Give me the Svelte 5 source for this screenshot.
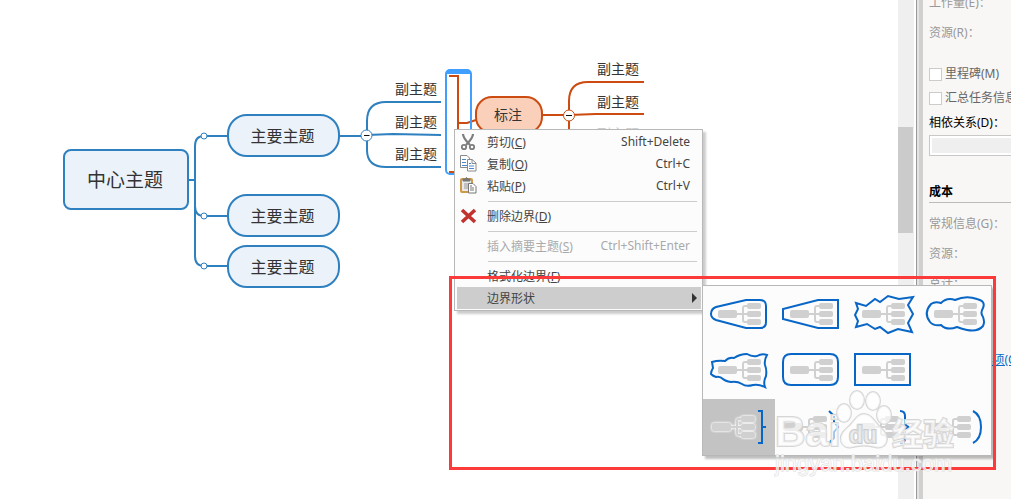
<script lang="ts">
  const topics = [
    { text: '中心主题', kind: 'central', x: 63, y: 149 },
    { text: '主要主题', kind: 'main', x: 227, y: 114 },
    { text: '主要主题', kind: 'main', x: 227, y: 194 },
    { text: '主要主题', kind: 'main', x: 227, y: 245 },
    { text: '副主题', kind: 'sub', x: 395, y: 78 },
    { text: '副主题', kind: 'sub', x: 395, y: 111 },
    { text: '副主题', kind: 'sub', x: 395, y: 143 },
    { text: '标注', kind: 'callout', x: 475, y: 96 },
    { text: '副主题', kind: 'sub', x: 597, y: 58 },
    { text: '副主题', kind: 'sub', x: 597, y: 91 },
    { text: '副主题', kind: 'sub faded', x: 597, y: 123 }
  ];

  const menu = [
    { label: '剪切', key: 'C', shortcut: 'Shift+Delete', icon: 'cut' },
    { label: '复制', key: 'O', shortcut: 'Ctrl+C', icon: 'copy' },
    { label: '粘贴', key: 'P', shortcut: 'Ctrl+V', icon: 'paste' },
    null,
    { label: '删除边界', key: 'D', icon: 'delete' },
    null,
    { label: '插入摘要主题', key: 'S', shortcut: 'Ctrl+Shift+Enter', disabled: true },
    null,
    { label: '格式化边界', key: 'F' },
    { label: '边界形状', submenu: true }
  ];

  const shapes = [
    { name: '圆角锥形', d: 'M43 14H57Q63 14 63 20V36Q63 42 57 42H43L13 34Q8 32 8 28Q8 23 13 21Z' },
    { name: '直角锥形', d: 'M43 14H63V42H43L8 33V23Z' },
    { name: '锯齿', d: 'M9 17L19 20L28 13L33 16L41 10L52 13L66 11L61 19L66 28L61 37L65 46L51 43L41 47L33 41L28 43L20 38L9 41L11 35L8 29L11 23Z' },
    { name: '云形', d: 'M12 18Q16 15 22 17Q28 11 36 14Q47 9 58 13Q67 15 64 22Q61 27 64 31Q66 36 64 40Q59 46 48 44Q43 43 38 41Q28 45 22 39Q14 40 11 36Q4 27 12 18Z' },
    { name: '波浪', d: 'M9 20Q15 18 22 19Q26 15 31 16Q37 12 44 12Q49 15 54 14Q59 11 64 13Q61 18 62 23Q64 28 63 34Q60 40 62 45Q56 42 50 43Q43 45 39 42Q34 39 28 40Q22 39 20 37Q17 34 13 35Q10 34 8 32Q8 29 10 26Z' },
    { name: '圆角矩形', d: 'M16 12H55Q63 12 63 20V35Q63 43 55 43H16Q8 43 8 35V20Q8 12 16 12Z' },
    { name: '矩形', d: 'M8 12H63V43H8Z' },
    null,
    { name: '方括号', d: 'M55 12H59V44H55M59 28H63', summary: true, selected: true },
    { name: '尖括号', d: 'M54 12L59 17V23L63 28L59 33V39L54 44', summary: true },
    { name: '花括号', d: 'M53 12Q58 12 58 17V23Q58 27 62 28Q58 29 58 33V39Q58 44 53 44', summary: true },
    { name: '圆括号', d: 'M54 12Q62 16 62 28Q62 40 54 44', summary: true }
  ];
</script>

<div class="app">
  <main class="canvas">
    <svg class="links" width="660" height="300">
      <g class="blue">
        <path d="M188 180H195M227 136H204Q195 136 195 146V256Q195 266 204 266H227M195 206Q195 216 204 216H227" />
        <path d="M340 136H367M441 102H386Q367 102 367 121V150Q367 167 386 167H441M367 135L393 134L441 135" />
      </g>
      <g class="orange">
        <path d="M449 76H458V172H449M458 123H467L476 120M543 115H569M644 82H588Q569 82 569 101V140M569 115L596 114H644" />
      </g>
      <g class="dots">
        <circle cx="204" cy="136" r="3" />
        <circle cx="204" cy="216" r="3" />
        <circle cx="204" cy="266" r="3" />
      </g>
      <g class="toggle"><circle cx="366.5" cy="135.5" r="5.5" /><path d="M364 135.500H369.500" /></g>
      <g class="toggle warm"><circle cx="569" cy="115.500" r="5.5" /><path d="M566 115.500H572" /></g>
    </svg>
    <div class="boundary"></div>
    {#each topics as topic}
      <div class="topic {topic.kind}" style="left: {topic.x}px; top: {topic.y}px">{topic.text}</div>
    {/each}
  </main>

  <div class="scrollbar"><div class="thumb"></div></div>
  <div class="splitter"></div>

  <aside class="panel">
    <p class="first">工作量(E)：</p>
    <p class="resource">资源(R)：</p>
    <label class="check"><input type="checkbox" />里程碑(M)</label>
    <label class="check"><input type="checkbox" />汇总任务信息(U)</label>
    <label class="depends" for="depends">相依关系(D)：</label>
    <input id="depends" class="field" type="text" readonly />
    <h2>成本</h2>
    <p>常规信息(G)：</p>
    <p>资源：</p>
    <p>总计：</p>
    <a href="#options">任务信息选项(O)</a>
  </aside>

  <ul class="menu">
    {#each menu as item}
      {#if item}
        <li>
          <button class:active={item.submenu} disabled={item.disabled}>
            <span class="icon">
              {#if item.icon === 'cut'}
                <svg width="16" height="18" viewBox="0 0 16 18">
                  <path d="M3 1Q3 5 10 12M13 1Q13 5 6 12" fill="none" stroke="#7d7d7d" stroke-width="2.2" />
                  <circle cx="4" cy="14" r="2.2" fill="none" stroke="#7d7d7d" stroke-width="1.8" />
                  <circle cx="12" cy="14" r="2.2" fill="none" stroke="#7d7d7d" stroke-width="1.8" />
                </svg>
              {:else if item.icon === 'copy'}
                <svg width="17" height="17" viewBox="0 0 17 17">
                  <path d="M.5 .5H7L9.500 3V12.500H.5Z" fill="#fff" stroke="#8a8a8a" />
                  <path d="M2 4.500H6M2 7.500H6M2 10.500H7" stroke="#4b86c6" />
                  <path d="M7.500 4.500H12L16 8V16H7.500Z" fill="#fff" stroke="#8a8a8a" />
                  <path d="M12 4.500V8.500H16" fill="none" stroke="#8a8a8a" />
                  <path d="M9 8.500H11M9 11H14M9 13.500H14" stroke="#4b86c6" />
                </svg>
              {:else if item.icon === 'paste'}
                <svg width="17" height="17" viewBox="0 0 17 17">
                  <rect x="1" y="2" width="11" height="13" rx="1" fill="#e9e9e9" stroke="#d09a45" stroke-width="2" />
                  <path d="M3 4V2H5Q6.500 -1 8 2H10V4Z" fill="#777" stroke="#777" />
                  <path d="M4 7H9M4 9H8M4 11H8" stroke="#9a9a9a" />
                  <path d="M8.500 6.500H13L16 9.500V16H8.500Z" fill="#fff" stroke="#777" />
                  <path d="M10 9H12M10 11H14M10 13H14" stroke="#777" />
                </svg>
              {:else if item.icon === 'delete'}
                <svg width="17" height="16" viewBox="0 0 17 16">
                  <path d="M2 2L15 14M15 2L2 14" stroke="#c2332f" stroke-width="3.6" />
                </svg>
              {/if}
            </span>
            <span class="label">{item.label}{#if item.key}(<u>{item.key}</u>){/if}</span>
            {#if item.shortcut}<span>{item.shortcut}</span>{/if}
            {#if item.submenu}<span class="arrow"></span>{/if}
          </button>
        </li>
      {:else}
        <li class="separator"></li>
      {/if}
    {/each}
  </ul>

  <div class="gallery">
    {#each shapes as shape}
      {#if shape}
        <button class:selected={shape.selected} aria-label={shape.name}>
          <svg width="72" height="56" viewBox="0 0 72 56">
            <g class="tree" class:glow={shape.selected} transform={shape.summary ? 'translate(-6 0)' : undefined}>
              <path d="M34 28H44M45 20H42Q40 20 40 22V34Q40 36 42 36H45" />
              <rect x="15" y="24" width="19" height="8" rx="2" />
              <rect x="44" y="17" width="14" height="6" rx="2" />
              <rect x="44" y="25" width="14" height="6" rx="2" />
              <rect x="44" y="33" width="14" height="6" rx="2" />
            </g>
            <path class="outline" d={shape.d} />
          </svg>
        </button>
      {:else}
        <span></span>
      {/if}
    {/each}
  </div>

  <div class="highlight"></div>

  <svg class="watermark" width="200" height="95" viewBox="0 0 200 95">
    <g class="brand">
      <text x="1" y="57" font-size="42">Bai</text>
      <g>
        <ellipse cx="70" cy="24" rx="7" ry="9" />
        <ellipse cx="83" cy="11" rx="7" ry="9" />
        <ellipse cx="99" cy="12" rx="7" ry="9" />
        <ellipse cx="110" cy="26" rx="7" ry="9" />
        <path d="M90 25C98 25 101 34 107 39C118 49 112 61 101 58C94 56 86 56 79 58C67 61 62 48 73 39C80 34 82 25 90 25Z" />
      </g>
      <text class="du" x="75" y="54" font-size="23">du</text>
      <text x="118" y="56" font-size="31">经验</text>
    </g>
    <text class="url" x="1" y="82" font-size="22">jingyan.baidu.com</text>
  </svg>
</div>

<style>
  :global(body) {
    margin: 0;
  }

  .app {
    position: relative;
    display: flex;
    height: 100vh;
    overflow: hidden;
    background: #fff;
    font-family: 'Noto Sans', 'Noto Sans CJK SC', sans-serif;
    font-size: 12px;
    color: #333;
  }

  .canvas {
    position: relative;
    flex: 1;
    min-width: 0;
  }

  .links {
    position: absolute;
    left: 0;
    top: 0;
    fill: none;
    stroke-width: 2;
  }

  .blue {
    stroke: #2f80bf;
  }

  .orange {
    stroke: #cc4b10;
  }

  .dots,
  .toggle circle {
    fill: #fff;
    stroke: #2f80bf;
    stroke-width: 1;
  }

  .toggle path {
    stroke: #111;
    stroke-width: 1;
  }

  .toggle.warm circle {
    stroke: #cc4b10;
  }

  .topic {
    position: absolute;
    box-sizing: border-box;
    display: flex;
    align-items: center;
    justify-content: center;
    padding-bottom: 2px;
    white-space: nowrap;
    font-family: 'Noto Sans CJK SC', sans-serif;
  }

  .central,
  .main {
    padding-right: 2px;
    border: 2px solid #2f80bf;
    background: #ebf2f9;
  }

  .central {
    width: 126px;
    height: 61px;
    border-radius: 8px;
    font-size: 19px;
  }

  .main {
    width: 113px;
    height: 43px;
    border-radius: 20px;
    font-size: 16px;
  }

  .callout {
    width: 68px;
    height: 38px;
    padding-right: 2px;
    border: 2px solid #cc4b10;
    border-radius: 17px;
    background: #fbd0bb;
    font-size: 14px;
  }

  .sub {
    height: 22px;
    font-size: 14px;
  }

  .faded {
    color: #ccc;
  }

  .boundary {
    position: absolute;
    left: 445px;
    top: 69px;
    box-sizing: border-box;
    width: 27px;
    height: 106px;
    border: 2px solid #409eff;
    border-top-width: 5px;
    border-radius: 5px;
  }

  .scrollbar {
    width: 16px;
    padding-top: 127px;
    box-sizing: border-box;
    background: #efefef;
  }

  .thumb {
    width: 15px;
    height: 106px;
    background: #cbcbcb;
  }

  .splitter {
    width: 2px;
    margin-left: 2px;
    border-left: 1px solid #999;
    border-right: 4px solid #d0d0d0;
    background: #e3e3e3;
  }

  .panel {
    width: 88px;
    box-sizing: border-box;
    padding-left: 6px;
    overflow: hidden;
    background: #f8f7f6;
    white-space: nowrap;
    line-height: 20px;
    color: #999;
  }

  .panel p {
    margin: 0 0 10px;
  }

  .panel .first {
    margin-top: -7px;
  }

  .panel .resource {
    margin-bottom: 19px;
  }

  .check {
    display: flex;
    align-items: center;
    gap: 3px;
    height: 24px;
    color: #666;
  }

  .check input {
    appearance: none;
    flex: none;
    box-sizing: border-box;
    width: 13px;
    height: 13px;
    margin: 0;
    border: 1px solid #ccc;
    background: #fff;
  }

  .depends {
    display: block;
    margin: 3px 0 2px;
    color: #000;
  }

  .field {
    display: block;
    box-sizing: border-box;
    width: 140px;
    height: 21px;
    border: 1px solid #c8c8c8;
    outline: 2px solid #fff;
    outline-offset: -3px;
    background: #efefef;
  }

  .panel h2 {
    margin: 26px 0 11px;
    border-bottom: 1px solid #bbb;
    font-size: 12px;
    line-height: 20px;
    color: #000;
  }

  .panel a {
    display: flex;
    justify-content: flex-end;
    margin: 56px -10px 0 0;
    color: #0a6cc8;
  }

  .menu {
    position: absolute;
    left: 454px;
    top: 129px;
    box-sizing: border-box;
    width: 249px;
    margin: 0;
    padding: 1px 1px 1px 2px;
    border: 1px solid #b8b8b8;
    background: #fcfcfc;
    box-shadow: 3px 3px 2px rgba(0, 0, 0, 0.2);
    list-style: none;
  }

  .menu button {
    display: flex;
    align-items: center;
    width: 100%;
    height: 22px;
    padding: 0 11px 1px 0;
    border: 0;
    background: none;
    font: inherit;
    color: #444;
    text-align: left;
  }

  .menu button:disabled {
    color: #aaa;
  }

  .menu button.active {
    padding-right: 4px;
    background: #cdcdcd;
  }

  .icon {
    display: flex;
    width: 30px;
    padding-left: 3px;
    box-sizing: border-box;
  }

  .label {
    flex: 1;
  }

  .arrow {
    border: 5px solid transparent;
    border-left-color: #333;
    border-right: 0;
  }

  .separator {
    display: flex;
    align-items: center;
    height: 8px;
    padding: 0 4px 0 31px;
  }

  .separator::before {
    content: '';
    flex: 1;
    height: 1px;
    background: #ccc;
  }

  .gallery {
    position: absolute;
    left: 702px;
    top: 285px;
    display: grid;
    grid-template-columns: repeat(4, 72px);
    grid-template-rows: 56px 57px 56px;
    border: 1px solid #b8b8b8;
    background: #fcfcfc;
    box-shadow: 3px 3px 2px rgba(0, 0, 0, 0.25);
  }

  .gallery button {
    display: flex;
    align-items: flex-start;
    padding: 0;
    border: 0;
    background: none;
  }

  .gallery button.selected {
    background: #c3c3c3;
  }

  .tree {
    fill: #d0d0d0;
  }

  .tree path {
    fill: none;
    stroke: #d0d0d0;
    stroke-width: 2;
  }

  .glow {
    filter: drop-shadow(0 0 1px #fff) drop-shadow(0 0 1px #eee);
  }

  .outline {
    fill: none;
    stroke: #0866c6;
    stroke-width: 2;
  }

  .highlight {
    position: absolute;
    left: 449px;
    top: 276px;
    box-sizing: border-box;
    width: 547px;
    height: 194px;
    border: 3px solid #fc3a3a;
  }

  .watermark {
    position: absolute;
    left: 774px;
    top: 389px;
    font-family: 'Liberation Sans', 'Noto Sans CJK SC', sans-serif;
    fill: #fff;
    fill-opacity: 0.65;
    stroke: #d6d6d6;
    stroke-width: 2;
    paint-order: stroke;
  }

  .brand {
    font-weight: bold;
  }

  .du {
    fill: #eee;
    stroke: #ccc;
  }

  .url {
    stroke: #dedede;
    stroke-width: 1;
  }
</style>
